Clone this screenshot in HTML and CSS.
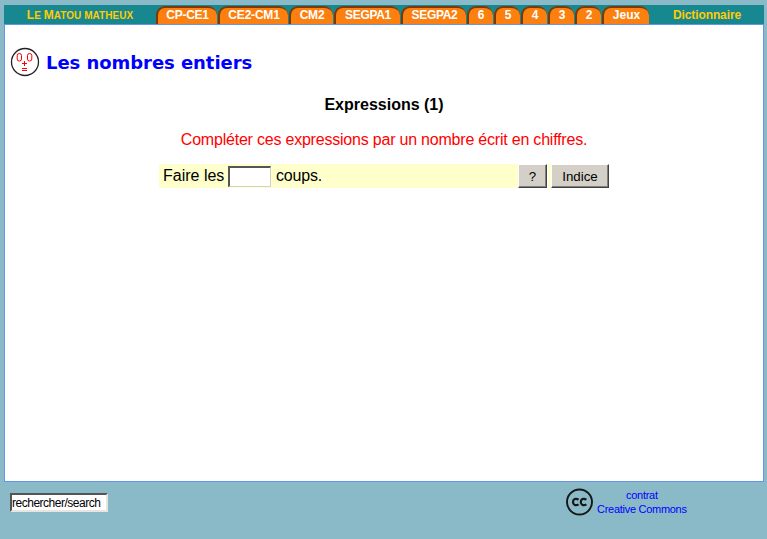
FILE: index.html
```
<!DOCTYPE html>
<html lang="fr">
<head>
<meta charset="utf-8">
<title>Les nombres entiers</title>
<link rel="stylesheet" href="styles.css">
</head>
<body>
<header class="topbar">
  <a class="brand"><b>L</b>e <b>M</b>atou matheux</a>
  <nav class="tabs">
    <a class="tab w-cp">CP-CE1</a>
    <a class="tab w-ce">CE2-CM1</a>
    <a class="tab w-cm">CM2</a>
    <a class="tab w-s1">SEGPA1</a>
    <a class="tab w-s2">SEGPA2</a>
    <a class="tab">6</a>
    <a class="tab">5</a>
    <a class="tab">4</a>
    <a class="tab">3</a>
    <a class="tab">2</a>
    <a class="tab w-jeux">Jeux</a>
  </nav>
  <a class="dictionary">Dictionnaire</a>
</header>
<main class="page">
  <div class="heading">
    <svg class="face" width="30" height="30" viewBox="0 0 30 30" fill="none">
      <circle cx="15" cy="15" r="13.5" stroke="#222" stroke-width="1.3"/>
      <g stroke="#f00" stroke-width="1">
        <rect x="7.200" y="6.500" width="4.300" height="7.500" rx="2"/>
        <rect x="17.500" y="6.500" width="4.300" height="7.500" rx="2"/>
        <path d="M12 16.500h5M14.500 14v5M12 21.500h5M12 23.500h5"/>
      </g>
    </svg>
    <h1>Les nombres entiers</h1>
  </div>
  <h2>Expressions (1)</h2>
  <p class="instruction">Compléter ces expressions par un nombre écrit en chiffres.</p>
  <div class="exercise">
    <div class="question"><span class="before">Faire les</span><input class="answer" type="text"><span class="after">coups.</span></div>
    <button class="check">?</button>
    <button class="hint">Indice</button>
  </div>
</main>
<footer class="footer">
  <input class="search" type="text" value="rechercher/search">
  <a class="license">
    <svg width="28" height="28" viewBox="0 0 28 28" fill="none" stroke="#171717">
      <circle cx="13.500" cy="14" r="12.500" stroke-width="2"/>
      <path stroke-width="2.200" d="M12.600 11.700C9.600 9.700 7 11.300 7 14s2.600 4.300 5.600 2.300M20.400 11.700C17.400 9.700 14.800 11.300 14.800 14s2.600 4.300 5.600 2.300"/>
    </svg>
    <span>contrat<br>Creative Commons</span>
  </a>
</footer>
</body>
</html>
```
FILE: styles.css
```
* { box-sizing: border-box; }
body {
  margin: 0;
  padding: 5px 3px 0 4px;
  height: 539px;
  overflow: hidden;
  background: #8abac8;
  font-family: "Liberation Sans", Arial, sans-serif;
}
.topbar {
  display: flex;
  height: 19px;
  background: #188890;
  font-size: 12px;
  font-weight: bold;
  line-height: 20px;
}
.brand {
  width: 152px;
  color: #fc0;
  text-align: center;
  text-transform: uppercase;
  font-size: 10px;
  letter-spacing: .05px;
  white-space: nowrap;
}
.brand b { font-size: 12px; }
.tabs { display: flex; gap: 1px; padding-top: 1px; }
.tab {
  width: 26px;
  height: 18px;
  border: solid #7a3a08;
  border-width: 2px 0 0 2px;
  border-radius: 9px 9px 0 0;
  background: #fc8010;
  color: #fff;
  text-align: center;
  line-height: 15px;
  letter-spacing: -.2px;
  white-space: nowrap;
}
.w-cp { width: 61px; letter-spacing: -.25px; }
.w-ce { width: 70px; }
.w-cm { width: 44px; }
.w-s1 { width: 66px; letter-spacing: -.3px; }
.w-s2 { width: 65px; letter-spacing: -.3px; }
.w-jeux { width: 47px; letter-spacing: 0; }
.dictionary { flex: 1; padding-left: 1px; text-align: center; color: #fc0; letter-spacing: -.1px; }
.page {
  height: 458px;
  padding-top: 22px;
  border: 1px solid #6495ed;
  background: #fff;
}
.heading { display: flex; align-items: center; height: 30px; padding-left: 5px; }
h1 {
  margin: 2px 0 0 6px;
  color: #00f;
  font: bold 18px/30px "DejaVu Sans", Verdana, sans-serif;
  letter-spacing: -.05px;
  white-space: nowrap;
}
h2 { margin: 19px 0 0; font-size: 16px; line-height: 18px; text-align: center; }
.instruction {
  margin: 17px 0 0;
  color: #f00;
  font-size: 16px;
  line-height: 18px;
  letter-spacing: -.21px;
  text-align: center;
}
.exercise { display: flex; width: 450px; height: 24px; margin: 15px 0 0 154px; }
.question {
  display: flex;
  flex: 1;
  align-items: center;
  padding-left: 4px;
  background: #ffc;
  font-size: 16px;
}
.before { width: 65px; white-space: nowrap; }
.answer {
  width: 43px;
  height: 21px;
  border: 1px solid #d4d0c8;
  border-top: 2px solid #555;
  border-left: 2px solid #555;
  background: #fff;
}
.after { margin-left: 5px; letter-spacing: -.2px; }
button {
  height: 24px;
  padding: 0;
  border: 1px solid;
  border-color: #fff #404040 #404040 #fff;
  background: #d4d0c8;
  color: #000;
  font: 13.333px "Liberation Sans", Arial, sans-serif;
  box-shadow: inset -1px -1px #808080;
}
.check { width: 29px; }
.hint { width: 58px; margin-left: 4px; box-shadow: inset -1px -1px #808080, -3px 0 #ffc; }
.footer { display: flex; padding: 6px 0 0 6px; }
.search {
  width: 98px;
  height: 19px;
  margin-top: 5px;
  padding: 1px 0 0;
  border: 2px solid #e8e4e0;
  border-top-color: #555;
  border-left-color: #555;
  background: #fff;
  color: #000;
  font: 12px "Liberation Sans", Arial, sans-serif;
  letter-spacing: -.49px;
}
.license {
  display: flex;
  margin-left: 458px;
  color: #00f;
  font-size: 11px;
  line-height: 14px;
  letter-spacing: -.28px;
  text-align: center;
}
.license span { margin-left: 3px; white-space: nowrap; }
```
